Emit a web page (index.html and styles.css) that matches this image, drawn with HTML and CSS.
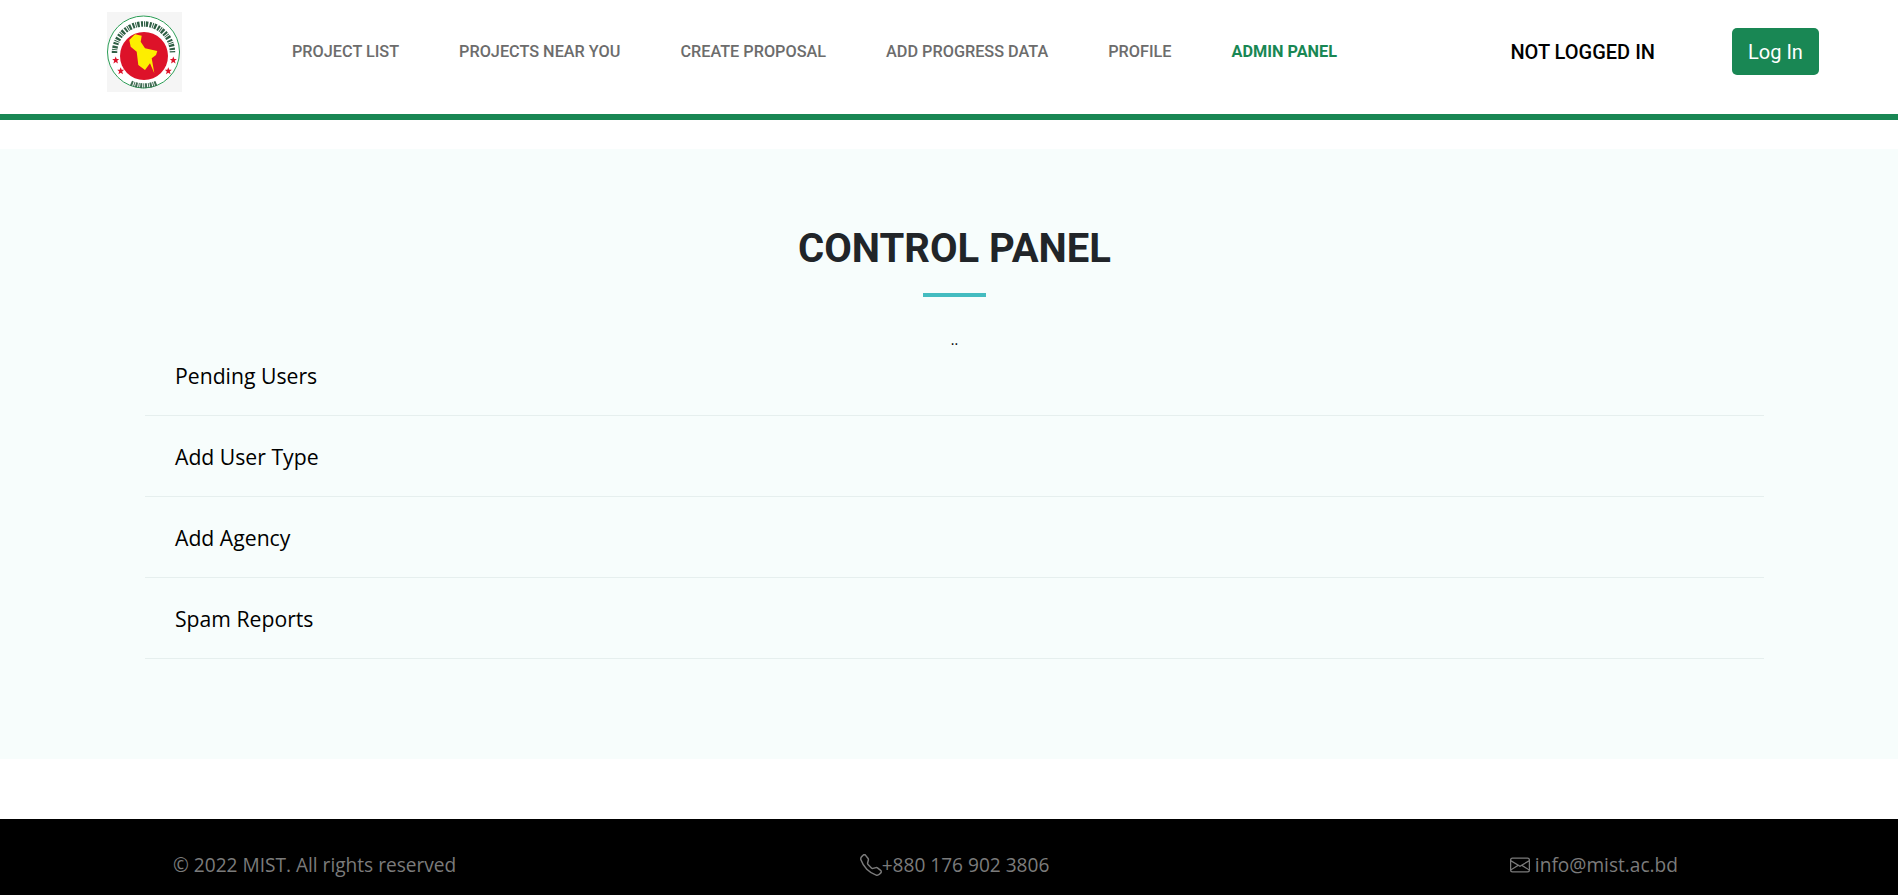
FILE: index.html
```html
<!DOCTYPE html>
<html lang="en">
<head>
    <meta charset="UTF-8">
    <meta name="viewport" content="width=device-width, initial-scale=1.0">
    <title>Admin Panel</title>
    <link rel="stylesheet" href="styles.css">
</head>
<body>
    <header class="topbar">
        <a class="logo" href="#">
            <svg width="75" height="80" viewBox="0 0 75 80" aria-label="Government seal">
                <rect width="75" height="80" fill="#f5f5f5"/>
                <circle cx="36.5" cy="40" r="36.5" fill="#fff"/>
                <circle cx="36.5" cy="40" r="36" fill="none" stroke="#2a9d55" stroke-width="1"/>
                <path d="M7.5 41 A29 29 0 1 1 65.5 41" fill="none" stroke="#2f5f45" stroke-width="5.5" stroke-dasharray="2 1 1 .8 2.4 1.4"/>
                <path d="M24 71 A32 32 0 0 0 50 71" fill="none" stroke="#3f6b52" stroke-width="5" stroke-dasharray="2 1 1 .8"/>
                <circle cx="37" cy="44" r="24" fill="#dd1229"/>
                <polygon points="22.3,28 28,22.3 34.7,23.7 33.7,29.7 38,36.3 50.3,39 49,43 44.7,46.3 47.3,61.3 43,51.3 38,58 31.3,53 29.7,39.7 23.7,34.7" fill="#fdee00"/>
                <g fill="#dd1229">
                    <polygon points="8.7,44.5 9.7,47 12.2,47 10.2,48.8 11,51.5 8.7,50 6.4,51.5 7.2,48.8 5.2,47 7.7,47"/>
                    <polygon points="13.7,55.2 14.7,57.7 17.2,57.7 15.2,59.5 16,62.2 13.7,60.7 11.4,62.2 12.2,59.5 10.2,57.7 12.7,57.7"/>
                    <polygon points="66.3,44.5 67.3,47 69.8,47 67.8,48.8 68.6,51.5 66.3,50 64,51.5 64.8,48.8 62.8,47 65.3,47"/>
                    <polygon points="61.3,55.2 62.3,57.7 64.8,57.7 62.8,59.5 63.6,62.2 61.3,60.7 59,62.2 59.8,59.5 57.8,57.7 60.3,57.7"/>
                </g>
            </svg>
        </a>
        <nav class="mainnav">
            <a href="#">PROJECT LIST</a>
            <a href="#">PROJECTS NEAR YOU</a>
            <a href="#">CREATE PROPOSAL</a>
            <a href="#">ADD PROGRESS DATA</a>
            <a href="#">PROFILE</a>
            <a class="active" href="#">ADMIN PANEL</a>
        </nav>
        <span class="login-status">NOT LOGGED IN</span>
        <button class="login-btn" type="button">Log In</button>
    </header>

    <main class="panel">
        <div class="panel-title">
            <h2>CONTROL PANEL</h2>
            <p>..</p>
        </div>
        <ul class="panel-list">
            <li><a href="#">Pending Users</a></li>
            <li><a href="#">Add User Type</a></li>
            <li><a href="#">Add Agency</a></li>
            <li><a href="#">Spam Reports</a></li>
        </ul>
    </main>

    <footer class="footer">
        <span class="copy">© 2022 MIST. All rights reserved</span>
        <span class="phone">
            <svg width="22" height="22" viewBox="0 0 16 16" fill="currentColor"><path d="M3.654 1.328a.678.678 0 0 0-1.015-.063L1.605 2.3c-.483.484-.661 1.169-.45 1.77a17.568 17.568 0 0 0 4.168 6.608 17.569 17.569 0 0 0 6.608 4.168c.601.211 1.286.033 1.77-.45l1.034-1.034a.678.678 0 0 0-.063-1.015l-2.307-1.794a.678.678 0 0 0-.58-.122l-2.19.547a1.745 1.745 0 0 1-1.657-.459L5.482 8.062a1.745 1.745 0 0 1-.46-1.657l.548-2.19a.678.678 0 0 0-.122-.58L3.654 1.328zM1.884.511a1.745 1.745 0 0 1 2.612.163L6.29 2.98c.329.423.445.974.315 1.494l-.547 2.19a.678.678 0 0 0 .178.643l2.457 2.457a.678.678 0 0 0 .644.178l2.189-.547a1.745 1.745 0 0 1 1.494.315l2.306 1.794c.829.645.905 1.87.163 2.611l-1.034 1.034c-.74.74-1.846 1.065-2.877.702a18.634 18.634 0 0 1-7.01-4.42 18.634 18.634 0 0 1-4.42-7.009c-.362-1.03-.037-2.137.703-2.877L1.885.511z"/></svg>+880 176 902 3806
        </span>
        <span class="mail">
            <svg width="20" height="20" viewBox="0 0 16 16" fill="currentColor"><path d="M0 4a2 2 0 0 1 2-2h12a2 2 0 0 1 2 2v8a2 2 0 0 1-2 2H2a2 2 0 0 1-2-2V4Zm2-1a1 1 0 0 0-1 1v.217l7 4.2 7-4.2V4a1 1 0 0 0-1-1H2Zm13 2.383-4.708 2.825L15 11.105V5.383Zm-.034 6.876-5.64-3.471L8 9.583l-1.326-.795-5.64 3.47A1 1 0 0 0 2 13h12a1 1 0 0 0 .966-.741ZM1 11.105l4.708-2.897L1 5.383v5.722Z"/></svg> info@mist.ac.bd
        </span>
    </footer>
</body>
</html>
```

FILE: styles.css
```css
body {
    margin: 0;
    font-family: "Open Sans", sans-serif;
    background: #fff;
    color: #000;
}
a {
    text-decoration: none;
    color: inherit;
}

/* top bar */
.topbar {
    display: flex;
    align-items: center;
    height: 80px;
    padding: 12px 79px 22px 107px;
    border-bottom: 6px solid #198754;
    font-family: Roboto, sans-serif;
}
.logo {
    display: block;
    height: 80px;
    margin-right: 110px;
}
.mainnav {
    display: flex;
    gap: 60px;
    margin-top: -2px;
    font-size: 16.26px;
    font-weight: 500;
    color: #6c6c6c;
}
.mainnav .active {
    color: #198754;
    font-weight: 700;
}
.login-status {
    margin-left: auto;
    margin-right: 77px;
    font-size: 20px;
    font-weight: 500;
}
.login-btn {
    width: 87px;
    height: 47px;
    margin-top: -1px;
    padding: 0;
    border: none;
    border-radius: 5px;
    background-color: #198754;
    color: #fff;
    font-family: Roboto, sans-serif;
    font-size: 20px;
    cursor: pointer;
}

/* control panel */
.panel {
    height: 610px;
    margin-top: 29px;
    padding: 0 134px 0 145px;
    background-color: #f7fdfc;
    box-sizing: border-box;
}
.panel-title {
    text-align: center;
    padding-top: 74px;
}
.panel-title h2 {
    margin: 0;
    font-family: Roboto, sans-serif;
    font-size: 40px;
    line-height: 52px;
    font-weight: 700;
    color: #212529;
}
.panel-title h2::after {
    content: "";
    display: block;
    width: 63px;
    height: 4px;
    margin: 18px auto 0;
    background-color: #44bcc0;
}
.panel-title p {
    margin: 33px 0 0;
    font-size: 14px;
    line-height: 19px;
}
.panel-list {
    list-style: none;
    margin: -14px 0 0;
    padding: 0;
}
.panel-list li {
    height: 80px;
    padding-left: 30px;
    border-bottom: 1px solid #e6efee;
    font-size: 21.2px;
    line-height: 82px;
}

/* footer */
.footer {
    display: grid;
    grid-template-columns: 1fr 1fr 1fr;
    align-items: center;
    height: 60px;
    margin-top: 60px;
    padding: 16px 220px 0 173px;
    background-color: #000;
    color: #7b7b7b;
    font-size: 19.1px;
}
.phone {
    display: flex;
    align-items: center;
    justify-content: center;
    padding-left: 58px;
}
.mail {
    display: flex;
    align-items: center;
    justify-content: flex-end;
    gap: 5px;
}
```
